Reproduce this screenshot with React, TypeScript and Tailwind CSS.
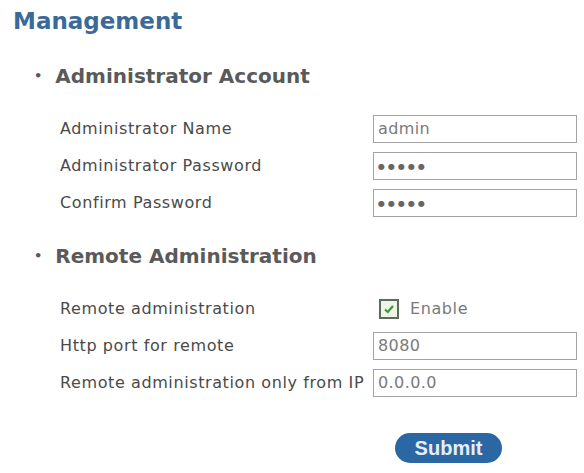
import type { ReactNode } from "react";

const verdana = { fontFamily: '"DejaVu Sans", Verdana, sans-serif' };

function Section({ title, children }: { title: string; children: ReactNode }) {
  return (
    <div>
      <div className="flex items-center pl-[34px] text-[20px] font-bold text-[#5a5a5a]">
        <span className="mr-[13px] text-[13px]">•</span>
        {title}
      </div>
      <div className="mt-[24px] flex flex-col gap-[9px] pl-[60px]">{children}</div>
    </div>
  );
}

function Row({ label, children }: { label: string; children: ReactNode }) {
  return (
    <div className="grid h-[28px] grid-cols-[313px_204px] items-center">
      <span className="text-[16px] tracking-[0.6px] text-[#4a4a4a]">{label}</span>
      {children}
    </div>
  );
}

function Field({ value, masked }: { value: string; masked?: boolean }) {
  return (
    <div className="flex h-[28px] items-center border border-[#a3a3a3] px-[4px] text-[16px] tracking-[0.4px] text-[#7a7a7a]">
      {masked ? <span className="pt-[2px] text-[8px] tracking-[3px] text-[#666]">●●●●●</span> : value}
    </div>
  );
}

export default function App() {
  return (
    <div className="h-[473px] w-[584px] bg-white pt-[4px]" style={verdana}>
      <h1 className="pl-[13px] text-[23px] font-bold text-[#3b6a99]">Management</h1>

      <div className="mt-[22px]">
        <Section title="Administrator Account">
          <Row label="Administrator Name">
            <Field value="admin" />
          </Row>
          <Row label="Administrator Password">
            <Field value="" masked />
          </Row>
          <Row label="Confirm Password">
            <Field value="" masked />
          </Row>
        </Section>
      </div>

      <div className="mt-[24px]">
        <Section title="Remote Administration">
          <Row label="Remote administration">
            <div className="flex items-center pl-[6px]">
              <span className="flex size-[20px] items-center justify-center border-2 border-[#5b6b5b] bg-[#eef4e6]">
                <svg viewBox="0 0 12 12" className="size-[12px]">
                  <path d="M2 6.5 L4.8 9 L10 3" fill="none" stroke="#3a9a3a" strokeWidth="2.2" />
                </svg>
              </span>
              <span className="ml-[11px] text-[16px] tracking-[0.6px] text-[#7a7a7a]">Enable</span>
            </div>
          </Row>
          <Row label="Http port for remote">
            <Field value="8080" />
          </Row>
          <Row label="Remote administration only from IP">
            <Field value="0.0.0.0" />
          </Row>
        </Section>
      </div>

      <div className="mt-[36px] pl-[395px]">
        <button
          className="h-[30px] w-[107px] rounded-full bg-[#2c67a5] text-[20px] font-bold text-[#e6eef8]"
          style={{ fontFamily: '"Liberation Sans", Arial, sans-serif' }}
        >
          Submit
        </button>
      </div>
    </div>
  );
}
